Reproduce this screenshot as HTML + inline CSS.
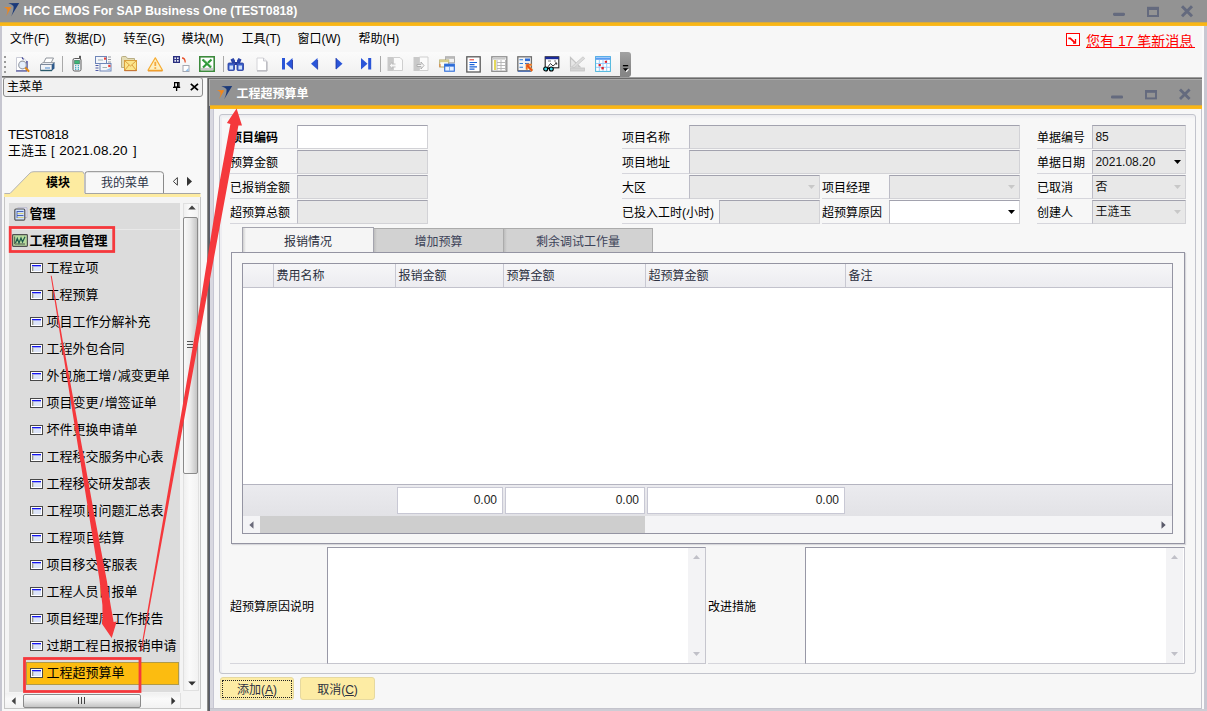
<!DOCTYPE html>
<html lang="zh-CN"><head><meta charset="utf-8"><title>HCC EMOS For SAP Business One (TEST0818)</title>
<style>
html,body{margin:0;padding:0}
body{width:1207px;height:711px;overflow:hidden;position:relative;background:#f7f7f7;font-family:"Liberation Sans","Noto Sans CJK SC",sans-serif;font-size:12px;color:#000;line-height:1}
div,span{box-sizing:border-box}
.a{position:absolute}
.t{position:absolute;white-space:nowrap;line-height:16px;height:16px}
.mi{position:absolute;white-space:nowrap;font-size:13px;line-height:18px;height:18px}
.lb{position:absolute;white-space:nowrap;line-height:16px;height:24px;border-bottom:1px solid #d6d6dc;padding-top:5px}
.in{position:absolute;height:24px;background:#e8e8e8;border:1px solid #d2d2d6;border-top-color:#a2a2ae;border-left-color:#bcbcc6;line-height:22px;padding-left:2.4px;white-space:nowrap;color:#111}
.w{background:#fff}
.ic{position:absolute;width:16px;height:16px}
svg{position:absolute;overflow:visible}
</style></head><body>

<div class="a" style="left:0;top:0;width:1207px;height:23px;background:#939393"></div>
<div class="a" style="left:0;top:22px;width:1207px;height:4px;background:linear-gradient(180deg,#b9a060 0,#f9b616 1px,#f9b616 3px,#fabd30 4px)"></div>
<div class="t" style="left:23.5px;top:3px;color:#fff;font-weight:bold;font-size:12.3px">HCC EMOS For SAP Business One (TEST0818)</div>
<svg style="left:0px;top:0px" width="20" height="18" viewBox="0 0 20 18"><path d="M8.2 3.2 L19.2 3 L11.2 16.3 Q14.3 9 13.4 6 Q12 4.2 8.2 3.2Z" fill="#1b3a7a"/><path d="M4 7 L11.3 7.2 L6.1 16.3 Q8 11.5 7.3 9.6 Q6.5 8 4 7Z" fill="#f0861a"/></svg>
<svg style="left:1113px;top:4px" width="90" height="16" viewBox="0 0 90 16"><rect x="0" y="8.7" width="12" height="3.2" rx="1.4" fill="#646a7e"/><rect x="35" y="4" width="10" height="8" fill="none" stroke="#646a7e" stroke-width="2"/><rect x="34" y="2.8" width="12" height="3.2" fill="#646a7e"/><path d="M69 2.3 L79 12.3 M79 2.3 L69 12.3" stroke="#646a7e" stroke-width="3" fill="none"/></svg>
<div class="t" style="left:10px;top:31px">文件(F)</div>
<div class="t" style="left:65px;top:31px">数据(D)</div>
<div class="t" style="left:123.5px;top:31px">转至(G)</div>
<div class="t" style="left:181.5px;top:31px">模块(M)</div>
<div class="t" style="left:241.5px;top:31px">工具(T)</div>
<div class="t" style="left:297.5px;top:31px">窗口(W)</div>
<div class="t" style="left:358.5px;top:31px">帮助(H)</div>
<div class="t" style="left:1086px;top:32.6px;font-size:14px;color:#f00">您有 17 笔新消息</div>
<div class="a" style="left:1086px;top:47px;width:109px;height:1px;background:#f00"></div>
<svg style="left:1066px;top:33px" width="14" height="13" viewBox="0 0 14 13"><rect x="0.5" y="0.5" width="13" height="12" fill="#fff" stroke="#f00" stroke-width="1"/><path d="M2.3 5.4 L4.3 5.4 L8.8 9.6" stroke="#f00" stroke-width="1.7" fill="none"/><path d="M9.5 6 V10.2 H7" stroke="#f00" stroke-width="1.3" fill="none"/></svg>
<div class="a" style="left:2px;top:52px;width:618px;height:24px;background:linear-gradient(180deg,#fbfbfb,#f0f0f0)"></div>
<div class="a" style="left:0;top:76px;width:629px;height:1px;background:#686868"></div>
<div class="a" style="left:0;top:77px;width:1202px;height:1px;background:#9e9e9e"></div>
<div class="a" style="left:4px;top:56px;width:2px;height:2px;background:#9a9a9a"></div>
<div class="a" style="left:4px;top:61px;width:2px;height:2px;background:#9a9a9a"></div>
<div class="a" style="left:4px;top:66px;width:2px;height:2px;background:#9a9a9a"></div>
<div class="a" style="left:4px;top:71px;width:2px;height:2px;background:#9a9a9a"></div>
<div class="a" style="left:62px;top:56px;width:1px;height:16px;background:#a9a9a9"></div>
<div class="a" style="left:223px;top:56px;width:1px;height:16px;background:#a9a9a9"></div>
<div class="a" style="left:380px;top:56px;width:1px;height:16px;background:#a9a9a9"></div>
<svg style="left:14px;top:56px" width="16" height="16" viewBox="0 0 16 16"><path d="M2.5 1.5 H9 L12.5 5 V14.5 H2.5Z" fill="#fff" stroke="#c9cbd6" stroke-width="1"/><path d="M2 15 H13 M13 5 V15" stroke="#2a2f8a" stroke-width="1.2" fill="none"/><circle cx="8.5" cy="9" r="3.8" fill="#e6f0fc" stroke="#9a9fa8" stroke-width="1.2"/><path d="M11.8 12.2 L14.5 15" stroke="#e08a1c" stroke-width="2.2" stroke-linecap="round"/><path d="M8 1.5 L9.5 3.5" stroke="#2a2f8a" stroke-width="1.2"/></svg>
<svg style="left:39px;top:56px" width="17" height="16" viewBox="0 0 17 16"><path d="M4.5 7 L7 2 H14.5 L12 7Z" fill="#fff" stroke="#8f949c" stroke-width="1"/><path d="M1.5 8.5 L4 6.5 H15.5 L13 8.5Z" fill="#e9ecf2" stroke="#8f949c" stroke-width="0.8"/><path d="M1.5 8.5 H13 V14.5 H1.5Z" fill="#f1f3f7" stroke="#7d8a9c" stroke-width="1"/><path d="M13 8.5 L15.5 6.5 V12.5 L13 14.5Z" fill="#2e5a8c"/><path d="M1.5 14.5 H13" stroke="#2a5a6a" stroke-width="1.4"/><path d="M6 12 H11" stroke="#7aa6d8" stroke-width="1.4"/></svg>
<svg style="left:72px;top:55px" width="10" height="17" viewBox="0 0 10 17"><rect x="7.2" y="0.8" width="1.6" height="4" fill="#333"/><rect x="1" y="3.5" width="8" height="12.5" rx="1.6" fill="#f2f3f5" stroke="#5a5a5a" stroke-width="1"/><rect x="2.7" y="5.5" width="4.6" height="3.4" fill="#3cb878" stroke="#2a6a4a" stroke-width="0.6"/><path d="M3 10.6 H4.3 M5.7 10.6 H7 M3 12.6 H4.3 M5.7 12.6 H7 M3 14.4 H4.3 M5.7 14.4 H7" stroke="#4ab0c8" stroke-width="1.1"/></svg>
<svg style="left:94px;top:55px" width="18" height="17" viewBox="0 0 18 17"><rect x="1.5" y="1.5" width="11" height="7" fill="#f4f6fb" stroke="#6f86b8" stroke-width="1"/><rect x="10" y="2.5" width="2.2" height="2.2" fill="#e8433a"/><path d="M4 5 H9" stroke="#9aa" stroke-width="0.9"/><path d="M14 2 H17 M14 4.5 H17 M14 7 H17" stroke="#8a8f98" stroke-width="0.9"/><rect x="6" y="8.5" width="11" height="7.5" fill="#f4f6fb" stroke="#6f86b8" stroke-width="1"/><rect x="14.2" y="9.8" width="2.3" height="2.3" fill="#e8433a"/><path d="M8.5 12.5 H13" stroke="#9aa" stroke-width="0.9"/><path d="M12 15 H16.5 V13Z" fill="#8fc0ee"/><path d="M1.5 10.5 H4.5 M1.5 13 H4.5 M1.5 15.5 H4.5" stroke="#3a4aa0" stroke-width="0.9"/></svg>
<svg style="left:120px;top:55px" width="18" height="17" viewBox="0 0 18 17"><path d="M1.5 2.5 Q1.5 1.5 2.5 1.5 H6 L7.5 3.5 H14.5 V12.5 H1.5Z" fill="#e4dcb4" stroke="#b9ae84" stroke-width="1"/><rect x="4.5" y="5.5" width="12" height="10" fill="#fbe58a" stroke="#d9a13c" stroke-width="1"/><path d="M4.5 5.5 L10.5 11 L16.5 5.5 M4.5 15.5 L9 10 M16.5 15.5 L12 10" fill="none" stroke="#d9963a" stroke-width="0.9"/><path d="M4.5 15.7 H16.5" stroke="#c06a3a" stroke-width="0.9"/></svg>
<svg style="left:146px;top:56px" width="18" height="16" viewBox="0 0 18 16"><path d="M9.3 1.8 L16.5 14.3 H2 Z" fill="#fdf0c4" stroke="#f6ac32" stroke-width="1.25" stroke-linejoin="round"/><path d="M2 15 H16.5" stroke="#e8922a" stroke-width="1"/><path d="M9.3 5.8 V10" stroke="#f4a840" stroke-width="1.8"/><rect x="8.4" y="11.2" width="1.8" height="1.7" fill="#f4a840"/></svg>
<svg style="left:172px;top:55px" width="18" height="17" viewBox="0 0 18 17"><rect x="1" y="1" width="7" height="7" fill="#2a2f80"/><rect x="2.4" y="2.4" width="1.7" height="1.7" fill="#e8eaf6"/><rect x="5" y="2.4" width="1.7" height="1.7" fill="#e8eaf6"/><rect x="2.4" y="5" width="1.7" height="1.7" fill="#e8eaf6"/><rect x="5" y="5" width="1.7" height="1.7" fill="#e8eaf6"/><path d="M10 3 Q13.2 3 13.2 7.5" fill="none" stroke="#e8502a" stroke-width="1.3"/><rect x="11" y="10.5" width="6" height="6" fill="#fff" stroke="#a4a8b2" stroke-width="1"/><path d="M13.5 16 H16.5 V13Z" fill="#8fc0ee"/></svg>
<svg style="left:199px;top:56px" width="16" height="16" viewBox="0 0 16 16"><rect x="0.8" y="0.8" width="14.4" height="14.4" fill="#fff" stroke="#3d8a3d" stroke-width="1.6"/><rect x="2" y="11.8" width="12" height="2.4" fill="#c8c8c8"/><path d="M3.5 3.5 L12 11.5 M12.5 3.5 L4 11.5" stroke="#2f9a3a" stroke-width="2.2"/><path d="M5 3.5 L13 10.5" stroke="#8fd08f" stroke-width="0.8"/></svg>
<svg style="left:227px;top:57px" width="18" height="15" viewBox="0 0 18 15"><path d="M3.5 2.5 L6.5 1 L8 3.5 V6 H5 Z M10 3.5 L11.5 1 L14.5 2.5 L13 6 H10Z" fill="#2a44a8"/><rect x="1" y="6" width="6.5" height="7.5" rx="1" fill="#3a5fc8" stroke="#24389a" stroke-width="0.8"/><rect x="10" y="6" width="6.5" height="7.5" rx="1" fill="#3a5fc8" stroke="#24389a" stroke-width="0.8"/><rect x="2.5" y="8.5" width="3.5" height="4" fill="#cfe0fa"/><rect x="11.5" y="8.5" width="3.5" height="4" fill="#cfe0fa"/><rect x="7.5" y="5" width="2.5" height="3" fill="#24389a"/></svg>
<svg style="left:256px;top:57px" width="12" height="15" viewBox="0 0 12 15"><path d="M1 1 H7.5 L10.5 4 V13.5 H1Z" fill="#fff" stroke="#d4d4d8" stroke-width="1"/><path d="M1 14 H11 M11 4.5 V14" stroke="#a9a9b0" stroke-width="1" fill="none"/><path d="M7.5 1 V4 H10.5" fill="#ececf0" stroke="#c0c0c6" stroke-width="0.8"/></svg>
<svg style="left:282px;top:58px" width="12" height="12" viewBox="0 0 12 12"><rect x="0" y="0" width="3" height="11.5" fill="#2a55d8"/><path d="M10.5 0 V11.5 L4 5.75Z" fill="#2a55d8"/><path d="M10.5 2 V11.5" stroke="#1a2f9a" stroke-width="0.8"/></svg>
<svg style="left:310px;top:58px" width="9" height="12" viewBox="0 0 9 12"><path d="M7.5 0 V11.5 L1 5.75Z" fill="#2a55d8"/><path d="M7.6 2 V11.5" stroke="#1a2f9a" stroke-width="0.8"/></svg>
<svg style="left:335px;top:58px" width="9" height="12" viewBox="0 0 9 12"><path d="M1 0 V11.5 L7.5 5.75Z" fill="#2a55d8"/><path d="M1 0 V11" stroke="#1a2f9a" stroke-width="0.8"/></svg>
<svg style="left:360px;top:58px" width="12" height="12" viewBox="0 0 12 12"><path d="M1 0 V11.5 L7.5 5.75Z" fill="#2a55d8"/><rect x="8.2" y="0" width="3" height="11.5" fill="#2a55d8"/></svg>
<svg style="left:387px;top:56px" width="17" height="16" viewBox="0 0 17 16"><rect x="0.5" y="1" width="7" height="14" fill="#c9c9c9"/><path d="M6.5 1.5 H13 L15.5 4 V14.5 H6.5Z" fill="#fbfbfb" stroke="#cfcfcf" stroke-width="1"/><path d="M8.5 8 H5 V6 L2.5 9.5 L5 13 V11 H8.5" fill="#f5f5f5" stroke="#bdbdbd" stroke-width="0.9"/></svg>
<svg style="left:413px;top:56px" width="17" height="16" viewBox="0 0 17 16"><rect x="0.5" y="1" width="7" height="14" fill="#c9c9c9"/><path d="M6.5 1 H15 V14.5 H6.5Z" fill="#fbfbfb" stroke="#cfcfcf" stroke-width="1"/><path d="M4 8.5 H8 V6 L11 9.5 L8 13 V10.5 H4Z" fill="#f5f5f5" stroke="#a9a9a9" stroke-width="0.9"/></svg>
<svg style="left:439px;top:56px" width="16" height="16" viewBox="0 0 16 16"><rect x="6.5" y="0.8" width="9" height="6" fill="#f2f2f2" stroke="#a8a8a8" stroke-width="1"/><rect x="6.5" y="0.8" width="9" height="2" fill="#b9b9b9"/><rect x="0.7" y="4" width="9" height="7" fill="#fdfdf6" stroke="#b2a86a" stroke-width="1"/><rect x="0.7" y="4" width="9" height="2.2" fill="#d8cf8c"/><path d="M1 8 V11" stroke="#e8702a" stroke-width="0.9"/><rect x="5.7" y="8.2" width="9.6" height="7" fill="#e6f0ff" stroke="#2a6ad8" stroke-width="1.1"/><rect x="5.7" y="8.2" width="9.6" height="2.4" fill="#2a6ad8"/><path d="M10.5 10.6 V15" stroke="#7aa8e8" stroke-width="0.9"/></svg>
<svg style="left:465.5px;top:55.5px" width="15" height="17" viewBox="0 0 15 17"><rect x="0.8" y="0.8" width="13.4" height="15.2" fill="#fff" stroke="#5a5a5a" stroke-width="1.3"/><path d="M3.5 3.8 H8" stroke="#e0403a" stroke-width="1.1"/><path d="M3.5 6.5 H11 M3.5 8.7 H8.5 M3.5 10.9 H11 M3.5 13.1 H8.5" stroke="#1a62d8" stroke-width="1.2"/></svg>
<svg style="left:490.5px;top:55.5px" width="17" height="17" viewBox="0 0 17 17"><rect x="0.8" y="0.8" width="15" height="14.5" fill="#fff" stroke="#8c8c8c" stroke-width="1.3"/><rect x="2" y="2" width="12.6" height="1.6" fill="#c9c9c9"/><rect x="3" y="4" width="2" height="10" fill="#e4d85a"/><path d="M6 6.5 H14.5 M6 9.5 H14.5 M6 12.5 H14.5 M6 4 V14.5 M10 4 V14.5 M14.5 4 V14.5" stroke="#b2b2b2" stroke-width="0.9" fill="none"/></svg>
<svg style="left:517px;top:56px" width="16" height="16" viewBox="0 0 16 16"><rect x="0.8" y="0.8" width="13.6" height="14" fill="#f4f4f6" stroke="#6c6c6c" stroke-width="1.3"/><rect x="8" y="2.5" width="5" height="2.6" fill="#2a6ad8"/><path d="M2.5 3.8 H6 M2.5 7.5 H6 M2.5 11.2 H6" stroke="#2a7ad8" stroke-width="1.1"/><path d="M8 7.5 H12" stroke="#2a6ad8" stroke-width="1.1"/><path d="M1 15.2 H14" stroke="#2a5ab8" stroke-width="1"/><path d="M9 8 H14.5 V9.5 H12 L16 14 L14.5 15.5 L10.5 11.5 V13.5 H9Z" fill="#e8501a" stroke="#f09a3a" stroke-width="0.7"/></svg>
<svg style="left:543px;top:56px" width="17" height="16" viewBox="0 0 17 16"><rect x="2.2" y="0.8" width="13.6" height="11" fill="#fff" stroke="#222" stroke-width="1.1"/><rect x="2.2" y="0.8" width="13.6" height="2.4" fill="#1a2a9a"/><path d="M5 5 H8 M11 5 H13" stroke="#555" stroke-width="0.8"/><path d="M4 12 L7.5 7.5 L10 10 L13.5 7 M12 7 H13.7 V8.7" fill="none" stroke="#222" stroke-width="0.9"/><circle cx="2.7" cy="13" r="2" fill="#3ad8e8" stroke="#000" stroke-width="1.1"/><circle cx="8.3" cy="13" r="2" fill="#3ad8e8" stroke="#000" stroke-width="1.1"/><path d="M4.7 12.5 H6.3" stroke="#000" stroke-width="1"/></svg>
<svg style="left:569px;top:56px" width="17" height="16" viewBox="0 0 17 16"><path d="M1.5 1.5 V11 H11Z" fill="#e6e6e6" stroke="#c4c4c4" stroke-width="1.2"/><path d="M3 10.5 L14 0.8 L15.8 2.5 L5 12Z" fill="#dcdcdc" stroke="#c8c8c8" stroke-width="0.8"/><rect x="1.5" y="12" width="14" height="3" fill="#d4d4d4" stroke="#c4c4c4" stroke-width="0.8"/></svg>
<svg style="left:595px;top:56px" width="16" height="16" viewBox="0 0 16 16"><rect x="0.6" y="0.6" width="14.8" height="14.8" fill="#fff" stroke="#48b4dc" stroke-width="1"/><rect x="0.6" y="0.6" width="14.8" height="3.2" fill="#5a9cf2"/><rect x="1" y="1" width="14" height="0.9" fill="#a8d0fa"/><path d="M4.3 3.8 V15 M8 3.8 V15 M11.7 3.8 V15 M1 7.5 H15 M1 11.3 H15" stroke="#9accfa" stroke-width="1"/><rect x="9.8" y="4.8" width="2.2" height="2" fill="#e0202a"/><rect x="3.6" y="8" width="2.2" height="2.2" fill="#e0202a"/><rect x="6.4" y="11" width="2.4" height="2.4" fill="#e0202a"/></svg>
<div class="a" style="left:620px;top:52px;width:11px;height:24.5px;background:linear-gradient(180deg,#a2a2a2,#8a8a8a 60%,#858585);border-radius:0 3px 3px 0"></div>
<svg style="left:622px;top:64px" width="8" height="9" viewBox="0 0 8 9"><path d="M1.9 5.2 L7.2 5.2 L4.55 8.2Z" fill="#fff"/><rect x="0.9" y="1" width="5.3" height="1.3" fill="#000"/><path d="M0.9 4.2 L6.2 4.2 L3.55 7.2Z" fill="#000"/></svg>
<div class="a" style="left:207px;top:77px;width:995px;height:634px;background:#939393"></div>
<div class="a" style="left:207px;top:77px;width:995px;height:1px;background:#9e9e9e"></div>
<div class="a" style="left:207px;top:78px;width:995px;height:1px;background:#6a6a6a"></div>
<div class="a" style="left:1202px;top:26px;width:5px;height:685px;background:#fbfbfb"></div>
<div class="a" style="left:1204px;top:26px;width:3px;height:685px;background:#c8c8d2"></div>
<div class="a" style="left:0;top:79px;width:207px;height:632px;background:#f8f8f8"></div>
<div class="a" style="left:0;top:26px;width:1.5px;height:685px;background:#c6c6d0"></div>
<div class="a" style="left:3px;top:77px;width:200px;height:20px;border:1px solid #8c8c8c;border-radius:3px;background:#f1f1f1"></div>
<div class="t" style="left:7px;top:79px;font-size:12px">主菜单</div>
<svg style="left:172px;top:82px" width="10" height="11" viewBox="0 0 10 11"><path d="M2.6 0.6 H7 V5 H2.6Z M5.6 0.6 V5" fill="none" stroke="#000" stroke-width="1.2"/><path d="M1 5.4 H8.2 M4.6 5.4 V9" stroke="#000" stroke-width="1.3"/></svg>
<svg style="left:189.5px;top:83px" width="9" height="8" viewBox="0 0 9 8"><path d="M0.8 0.8 L8 7.2 M8 0.8 L0.8 7.2" stroke="#000" stroke-width="1.7"/></svg>
<div class="t" style="left:8px;top:127px;font-size:13.5px;letter-spacing:-0.55px">TEST0818</div>
<div class="t" style="left:8px;top:143px;font-size:13px">王涟玉<span class="a" style="left:43px;top:0">[</span><span class="a" style="left:51.2px;top:0;font-size:13.5px;letter-spacing:0.08px">2021.08.20</span><span class="a" style="left:125px;top:0">]</span></div>
<svg style="left:0;top:168px" width="205" height="32" viewBox="0 0 205 32"><path d="M85 25.5 V6 Q85 3.7 87.5 3.7 H160.5 Q163.5 3.7 163.5 6.5 V25.5" fill="#f8f8f8" stroke="#8a8a8a" stroke-width="1"/><path d="M4 25.5 H10 L30 5 Q31.5 3.7 34 3.7 H82 Q84 3.7 84 6 V25.7 H200.5 V29.2 H4Z" fill="#fdeba0"/><path d="M4.5 25.5 H10 L30 5 Q31.5 3.7 34 3.7 H82 Q84 3.7 84 6" fill="none" stroke="#b4b4b4" stroke-width="1"/><path d="M85 25.5 H200.5" fill="none" stroke="#a4a4a4" stroke-width="1"/><path d="M173.3 13.4 L177.4 9.6 V17.2Z" fill="#f8f8f8" stroke="#444" stroke-width="1"/><path d="M192 13.4 L187 8.8 V18Z" fill="#333"/></svg>
<div class="t" style="left:46px;top:175px;font-size:12px;font-weight:bold">模块</div>
<div class="t" style="left:101px;top:175px;font-size:12px;color:#2c3448">我的菜单</div>
<div class="a" style="left:4px;top:197px;width:197px;height:512px;background:#f4f4f4;border:1px solid #c6c6c6;border-top:none"></div>
<div class="a" style="left:9px;top:203px;width:171px;height:489px;background:#dcdcdc"></div>
<div class="a" style="left:9px;top:229px;width:171px;height:1px;background:#e9e9e9"></div>
<div class="a" style="left:26px;top:662px;width:153px;height:23px;background:#fcbc10;border:1px solid #b09a48"></div>
<div class="mi" style="left:29.4px;top:205px;font-weight:bold">管理</div>
<div class="mi" style="left:29.4px;top:232px;font-weight:bold">工程项目管理</div>
<div class="mi" style="left:46.4px;top:259px">工程立项</div>
<svg style="left:30px;top:263px" width="13" height="10" viewBox="0 0 13 10"><rect x="0.5" y="0.5" width="12" height="9" fill="#fff" stroke="#484848"/><rect x="2" y="2" width="9" height="6" fill="#dce4f8"/><rect x="2" y="2" width="9" height="1.3" fill="#1414f0"/><rect x="2" y="3.3" width="1.3" height="4.7" fill="#9a9a8a"/></svg>
<div class="mi" style="left:46.4px;top:286px">工程预算</div>
<svg style="left:30px;top:290px" width="13" height="10" viewBox="0 0 13 10"><rect x="0.5" y="0.5" width="12" height="9" fill="#fff" stroke="#484848"/><rect x="2" y="2" width="9" height="6" fill="#dce4f8"/><rect x="2" y="2" width="9" height="1.3" fill="#1414f0"/><rect x="2" y="3.3" width="1.3" height="4.7" fill="#9a9a8a"/></svg>
<div class="mi" style="left:46.4px;top:313px">项目工作分解补充</div>
<svg style="left:30px;top:317px" width="13" height="10" viewBox="0 0 13 10"><rect x="0.5" y="0.5" width="12" height="9" fill="#fff" stroke="#484848"/><rect x="2" y="2" width="9" height="6" fill="#dce4f8"/><rect x="2" y="2" width="9" height="1.3" fill="#1414f0"/><rect x="2" y="3.3" width="1.3" height="4.7" fill="#9a9a8a"/></svg>
<div class="mi" style="left:46.4px;top:340px">工程外包合同</div>
<svg style="left:30px;top:344px" width="13" height="10" viewBox="0 0 13 10"><rect x="0.5" y="0.5" width="12" height="9" fill="#fff" stroke="#484848"/><rect x="2" y="2" width="9" height="6" fill="#dce4f8"/><rect x="2" y="2" width="9" height="1.3" fill="#1414f0"/><rect x="2" y="3.3" width="1.3" height="4.7" fill="#9a9a8a"/></svg>
<div class="mi" style="left:46.4px;top:367px">外包施工增<span style="padding:0 1.4px">/</span>减变更单</div>
<svg style="left:30px;top:371px" width="13" height="10" viewBox="0 0 13 10"><rect x="0.5" y="0.5" width="12" height="9" fill="#fff" stroke="#484848"/><rect x="2" y="2" width="9" height="6" fill="#dce4f8"/><rect x="2" y="2" width="9" height="1.3" fill="#1414f0"/><rect x="2" y="3.3" width="1.3" height="4.7" fill="#9a9a8a"/></svg>
<div class="mi" style="left:46.4px;top:394px">项目变更<span style="padding:0 1.4px">/</span>增签证单</div>
<svg style="left:30px;top:398px" width="13" height="10" viewBox="0 0 13 10"><rect x="0.5" y="0.5" width="12" height="9" fill="#fff" stroke="#484848"/><rect x="2" y="2" width="9" height="6" fill="#dce4f8"/><rect x="2" y="2" width="9" height="1.3" fill="#1414f0"/><rect x="2" y="3.3" width="1.3" height="4.7" fill="#9a9a8a"/></svg>
<div class="mi" style="left:46.4px;top:421px">坏件更换申请单</div>
<svg style="left:30px;top:425px" width="13" height="10" viewBox="0 0 13 10"><rect x="0.5" y="0.5" width="12" height="9" fill="#fff" stroke="#484848"/><rect x="2" y="2" width="9" height="6" fill="#dce4f8"/><rect x="2" y="2" width="9" height="1.3" fill="#1414f0"/><rect x="2" y="3.3" width="1.3" height="4.7" fill="#9a9a8a"/></svg>
<div class="mi" style="left:46.4px;top:448px">工程移交服务中心表</div>
<svg style="left:30px;top:452px" width="13" height="10" viewBox="0 0 13 10"><rect x="0.5" y="0.5" width="12" height="9" fill="#fff" stroke="#484848"/><rect x="2" y="2" width="9" height="6" fill="#dce4f8"/><rect x="2" y="2" width="9" height="1.3" fill="#1414f0"/><rect x="2" y="3.3" width="1.3" height="4.7" fill="#9a9a8a"/></svg>
<div class="mi" style="left:46.4px;top:475px">工程移交研发部表</div>
<svg style="left:30px;top:479px" width="13" height="10" viewBox="0 0 13 10"><rect x="0.5" y="0.5" width="12" height="9" fill="#fff" stroke="#484848"/><rect x="2" y="2" width="9" height="6" fill="#dce4f8"/><rect x="2" y="2" width="9" height="1.3" fill="#1414f0"/><rect x="2" y="3.3" width="1.3" height="4.7" fill="#9a9a8a"/></svg>
<div class="mi" style="left:46.4px;top:502px">工程项目问题汇总表</div>
<svg style="left:30px;top:506px" width="13" height="10" viewBox="0 0 13 10"><rect x="0.5" y="0.5" width="12" height="9" fill="#fff" stroke="#484848"/><rect x="2" y="2" width="9" height="6" fill="#dce4f8"/><rect x="2" y="2" width="9" height="1.3" fill="#1414f0"/><rect x="2" y="3.3" width="1.3" height="4.7" fill="#9a9a8a"/></svg>
<div class="mi" style="left:46.4px;top:529px">工程项目结算</div>
<svg style="left:30px;top:533px" width="13" height="10" viewBox="0 0 13 10"><rect x="0.5" y="0.5" width="12" height="9" fill="#fff" stroke="#484848"/><rect x="2" y="2" width="9" height="6" fill="#dce4f8"/><rect x="2" y="2" width="9" height="1.3" fill="#1414f0"/><rect x="2" y="3.3" width="1.3" height="4.7" fill="#9a9a8a"/></svg>
<div class="mi" style="left:46.4px;top:556px">项目移交客服表</div>
<svg style="left:30px;top:560px" width="13" height="10" viewBox="0 0 13 10"><rect x="0.5" y="0.5" width="12" height="9" fill="#fff" stroke="#484848"/><rect x="2" y="2" width="9" height="6" fill="#dce4f8"/><rect x="2" y="2" width="9" height="1.3" fill="#1414f0"/><rect x="2" y="3.3" width="1.3" height="4.7" fill="#9a9a8a"/></svg>
<div class="mi" style="left:46.4px;top:583px">工程人员日报单</div>
<svg style="left:30px;top:587px" width="13" height="10" viewBox="0 0 13 10"><rect x="0.5" y="0.5" width="12" height="9" fill="#fff" stroke="#484848"/><rect x="2" y="2" width="9" height="6" fill="#dce4f8"/><rect x="2" y="2" width="9" height="1.3" fill="#1414f0"/><rect x="2" y="3.3" width="1.3" height="4.7" fill="#9a9a8a"/></svg>
<div class="mi" style="left:46.4px;top:610px">项目经理周工作报告</div>
<svg style="left:30px;top:614px" width="13" height="10" viewBox="0 0 13 10"><rect x="0.5" y="0.5" width="12" height="9" fill="#fff" stroke="#484848"/><rect x="2" y="2" width="9" height="6" fill="#dce4f8"/><rect x="2" y="2" width="9" height="1.3" fill="#1414f0"/><rect x="2" y="3.3" width="1.3" height="4.7" fill="#9a9a8a"/></svg>
<div class="mi" style="left:46.4px;top:637px">过期工程日报报销申请</div>
<svg style="left:30px;top:641px" width="13" height="10" viewBox="0 0 13 10"><rect x="0.5" y="0.5" width="12" height="9" fill="#fff" stroke="#484848"/><rect x="2" y="2" width="9" height="6" fill="#dce4f8"/><rect x="2" y="2" width="9" height="1.3" fill="#1414f0"/><rect x="2" y="3.3" width="1.3" height="4.7" fill="#9a9a8a"/></svg>
<div class="mi" style="left:46.4px;top:664px">工程超预算单</div>
<svg style="left:30px;top:668px" width="13" height="10" viewBox="0 0 13 10"><rect x="0.5" y="0.5" width="12" height="9" fill="#fff" stroke="#484848"/><rect x="2" y="2" width="9" height="6" fill="#dce4f8"/><rect x="2" y="2" width="9" height="1.3" fill="#1414f0"/><rect x="2" y="3.3" width="1.3" height="4.7" fill="#9a9a8a"/></svg>
<svg style="left:14px;top:207px" width="14" height="14" viewBox="0 0 14 14"><path d="M3.5 0.7 H13 V10.5 H11" fill="#e4e4f6" stroke="#b8b8cc" stroke-width="0.9"/><rect x="0.8" y="2" width="10" height="11.2" rx="1.2" fill="#cfe0fa" stroke="#555" stroke-width="1.2"/><path d="M3 4.5H9.5M3 8.5H9.5" stroke="#3a55b0" stroke-width="0.9"/><path d="M3 6.5H9.5M3 10.5H9.5" stroke="#d8cf70" stroke-width="0.9"/><path d="M3 4 V11" stroke="#3a55b0" stroke-width="0.8"/></svg>
<svg style="left:12px;top:233.5px" width="16" height="13" viewBox="0 0 16 13"><rect x="0.6" y="0.6" width="14.8" height="11.8" rx="0.8" fill="#b8dca0" stroke="#505050" stroke-width="1.2"/><path d="M2.7 2.5 V10 H13" fill="none" stroke="#444" stroke-width="0.9"/><path d="M3.5 9 L5.3 4.5 L7 9 L9 4 L10.5 8 L13 2.8" fill="none" stroke="#1c5a4a" stroke-width="1.2"/></svg>
<div class="a" style="left:183px;top:203px;width:16px;height:488px;background:linear-gradient(90deg,#f0f0f0,#fafafa 40%,#f2f2f2);border:1px solid #e0e0e0"></div>
<div class="a" style="left:183px;top:217px;width:15px;height:257px;border:1px solid #8a8a8a;border-radius:2px;background:linear-gradient(90deg,#fafafa,#ececec 45%,#c4c4c4)"></div>
<svg style="left:187.5px;top:205px" width="8" height="5" viewBox="0 0 8 5"><path d="M0.2 4.6 L4 0.6 L7.8 4.6Z" fill="#444"/></svg>
<svg style="left:187.5px;top:680.5px" width="8" height="5" viewBox="0 0 8 5"><path d="M0.2 0.4 L4 4.4 L7.8 0.4Z" fill="#333"/></svg>
<div class="a" style="left:187px;top:341px;width:6px;height:1px;background:#555"></div><div class="a" style="left:187px;top:344px;width:6px;height:1px;background:#555"></div><div class="a" style="left:187px;top:347px;width:6px;height:1px;background:#555"></div>
<div class="a" style="left:5px;top:693px;width:176px;height:15px;background:linear-gradient(180deg,#f0f0f0,#fafafa 40%,#f2f2f2);border-right:1px solid #e0e0e0"></div>
<div class="a" style="left:23px;top:694px;width:118px;height:14px;border:1px solid #8a8a8a;border-radius:2px;background:linear-gradient(180deg,#fafafa,#ececec 45%,#c4c4c4)"></div>
<svg style="left:10.5px;top:696.5px" width="5" height="8" viewBox="0 0 5 8"><path d="M4.6 0.2 L0.6 4 L4.6 7.8Z" fill="#444"/></svg>
<svg style="left:171px;top:696.5px" width="5" height="8" viewBox="0 0 5 8"><path d="M0.4 0.2 L4.4 4 L0.4 7.8Z" fill="#333"/></svg>
<div class="a" style="left:78px;top:697px;width:1px;height:7px;background:#444"></div><div class="a" style="left:81px;top:697px;width:1px;height:7px;background:#444"></div><div class="a" style="left:84px;top:697px;width:1px;height:7px;background:#444"></div>
<div class="a" style="left:207px;top:78px;width:1px;height:633px;background:#8c8c8c"></div>
<div class="a" style="left:208px;top:78px;width:1px;height:633px;background:#606060"></div>
<div class="a" style="left:209px;top:79px;width:1px;height:632px;background:#5a5e6e"></div>
<div class="a" style="left:209px;top:79px;width:1px;height:27px;background:#b0b0b0"></div>
<div class="a" style="left:210px;top:79px;width:992px;height:630px;background:#f7f7f7"></div>
<div class="a" style="left:210px;top:109px;width:3px;height:600px;background:#d8d8e0"></div>
<div class="a" style="left:213px;top:109px;width:1px;height:600px;background:#c6c6d2"></div>
<div class="a" style="left:1201px;top:109px;width:1px;height:600px;background:#c4c4cc"></div>
<div class="a" style="left:210px;top:708px;width:992px;height:1px;background:#c4c4cc"></div>
<div class="a" style="left:210px;top:709px;width:997px;height:2px;background:#cdcdd5"></div>
<div class="a" style="left:210px;top:79px;width:992px;height:27px;background:#939393;border-top:1px solid #aaa"></div>
<div class="a" style="left:210px;top:105px;width:992px;height:4px;background:linear-gradient(180deg,#b9a060 0,#f9b616 1px,#f9b616 3px,#fabd30 4px)"></div>
<svg style="left:213.3px;top:82.8px" width="20" height="18" viewBox="0 0 20 18"><path d="M8.2 3.2 L19.2 3 L11.2 16.3 Q14.3 9 13.4 6 Q12 4.2 8.2 3.2Z" fill="#1b3a7a"/><path d="M4 7 L11.3 7.2 L6.1 16.3 Q8 11.5 7.3 9.6 Q6.5 8 4 7Z" fill="#f0861a"/></svg>
<div class="t" style="left:236.5px;top:86px;color:#fff;font-weight:bold;font-size:12px">工程超预算单</div>
<svg style="left:1110.5px;top:87px" width="90" height="16" viewBox="0 0 90 16"><rect x="0" y="8.6" width="12" height="2.8" rx="1.2" fill="#646a7e"/><rect x="35" y="4" width="10" height="7.4" fill="none" stroke="#646a7e" stroke-width="1.9"/><rect x="34" y="3" width="12" height="2.8" fill="#646a7e"/><path d="M69 2.5 L78.6 12 M78.6 2.5 L69 12" stroke="#646a7e" stroke-width="2.8" fill="none"/></svg>
<div class="a" style="left:219px;top:114px;width:977px;height:560px;border:1px solid #c2c4cc;border-radius:3px;background:linear-gradient(180deg,#ebebef 0,#f7f7f7 4px);box-shadow:inset 2px 0 0 #eeeef2"></div>
<div class="lb" style="left:230px;top:125px;width:67px;font-weight:bold;">项目编码</div>
<div class="in w" style="left:297px;top:125px;width:131px"></div>
<div class="lb" style="left:230px;top:150px;width:67px;">预算金额</div>
<div class="in" style="left:297px;top:150px;width:131px"></div>
<div class="lb" style="left:230px;top:175px;width:67px;">已报销金额</div>
<div class="in" style="left:297px;top:175px;width:131px"></div>
<div class="lb" style="left:230px;top:200px;width:67px;">超预算总额</div>
<div class="in" style="left:297px;top:200px;width:131px"></div>
<div class="lb" style="left:622px;top:125px;width:67px;">项目名称</div>
<div class="in" style="left:689px;top:125px;width:331px"></div>
<div class="lb" style="left:622px;top:150px;width:67px;">项目地址</div>
<div class="in" style="left:689px;top:150px;width:331px"></div>
<div class="lb" style="left:622px;top:175px;width:67px;">大区</div>
<div class="in" style="left:689px;top:175px;width:131px"><svg style="right:4px;top:9px" width="7" height="4" viewBox="0 0 7 4"><path d="M0 0 H7 L3.5 4Z" fill="#c8c8c8"/></svg></div>
<div class="lb" style="left:822px;top:175px;width:67px;">项目经理</div>
<div class="in" style="left:889px;top:175px;width:131px"><svg style="right:4px;top:9px" width="7" height="4" viewBox="0 0 7 4"><path d="M0 0 H7 L3.5 4Z" fill="#c8c8c8"/></svg></div>
<div class="lb" style="left:622px;top:200px;width:97px;">已投入工时(小时)</div>
<div class="in" style="left:719px;top:200px;width:101px"></div>
<div class="lb" style="left:822px;top:200px;width:67px;">超预算原因</div>
<div class="in w" style="left:889px;top:200px;width:131px"><svg style="right:4px;top:9px" width="7" height="4" viewBox="0 0 7 4"><path d="M0 0 H7 L3.5 4Z" fill="#000"/></svg></div>
<div class="lb" style="left:1037px;top:125px;width:55px;">单据编号</div>
<div class="in" style="left:1092px;top:125px;width:94px">85</div>
<div class="lb" style="left:1037px;top:150px;width:55px;">单据日期</div>
<div class="in" style="left:1092px;top:150px;width:94px">2021.08.20<svg style="right:4px;top:9px" width="7" height="4" viewBox="0 0 7 4"><path d="M0 0 H7 L3.5 4Z" fill="#000"/></svg></div>
<div class="lb" style="left:1037px;top:175px;width:55px;">已取消</div>
<div class="in" style="left:1092px;top:175px;width:94px">否<svg style="right:4px;top:9px" width="7" height="4" viewBox="0 0 7 4"><path d="M0 0 H7 L3.5 4Z" fill="#c8c8c8"/></svg></div>
<div class="lb" style="left:1037px;top:200px;width:55px;">创建人</div>
<div class="in" style="left:1092px;top:200px;width:94px">王涟玉<svg style="right:4px;top:9px" width="7" height="4" viewBox="0 0 7 4"><path d="M0 0 H7 L3.5 4Z" fill="#c8c8c8"/></svg></div>
<div class="a" style="left:231px;top:252px;width:954px;height:292px;border:1px solid #9494a2;background:#f7f7f7;box-shadow:1px 1px 1px #d8d8dc"></div>
<div class="a" style="left:373px;top:228px;width:131px;height:24px;background:linear-gradient(90deg,#bdbdbd 0,#d2d2d2 3px);border:1px solid #ababab;border-bottom:none"></div>
<div class="a" style="left:503px;top:228px;width:150px;height:24px;background:linear-gradient(90deg,#bdbdbd 0,#d2d2d2 3px);border:1px solid #ababab;border-bottom:none"></div>
<div class="a" style="left:242px;top:227px;width:132px;height:25px;background:linear-gradient(90deg,#d0d0d0 0,#f5f5f5 3px);border:1px solid #a4a4ae;border-bottom:none"></div>
<div class="t" style="left:242px;top:234px;width:132px;text-align:center;color:#2c3040">报销情况</div>
<div class="t" style="left:373px;top:234px;width:131px;text-align:center;color:#3c4258">增加预算</div>
<div class="t" style="left:503px;top:234px;width:150px;text-align:center;color:#3c4258">剩余调试工作量</div>
<div class="a" style="left:242px;top:263px;width:931px;height:271px;border:1px solid #9494a2;background:#fff"></div>
<div class="a" style="left:243px;top:264px;width:929px;height:24px;background:linear-gradient(180deg,#f6f6f8,#ececf0);border-bottom:1px solid #c2c2cc"></div>
<div class="a" style="left:273px;top:264px;width:1px;height:23px;background:#c8c8d2"></div>
<div class="t" style="left:276.5px;top:268px;color:#2c3040">费用名称</div>
<div class="a" style="left:395px;top:264px;width:1px;height:23px;background:#c8c8d2"></div>
<div class="t" style="left:398.5px;top:268px;color:#2c3040">报销金额</div>
<div class="a" style="left:503px;top:264px;width:1px;height:23px;background:#c8c8d2"></div>
<div class="t" style="left:506.5px;top:268px;color:#2c3040">预算金额</div>
<div class="a" style="left:645px;top:264px;width:1px;height:23px;background:#c8c8d2"></div>
<div class="t" style="left:648.5px;top:268px;color:#2c3040">超预算金额</div>
<div class="a" style="left:845px;top:264px;width:1px;height:23px;background:#c8c8d2"></div>
<div class="t" style="left:848.5px;top:268px;color:#2c3040">备注</div>
<div class="a" style="left:243px;top:484px;width:929px;height:32px;background:linear-gradient(180deg,#ebebef,#e2e2e6);border-top:1px solid #b4b4c0"></div>
<div class="a" style="left:397px;top:487px;width:106px;height:27px;background:#fff;border:1px solid #c8c8d4;text-align:right;padding-right:5px;line-height:25px;color:#222">0.00</div>
<div class="a" style="left:505px;top:487px;width:140px;height:27px;background:#fff;border:1px solid #c8c8d4;text-align:right;padding-right:5px;line-height:25px;color:#222">0.00</div>
<div class="a" style="left:647px;top:487px;width:198px;height:27px;background:#fff;border:1px solid #c8c8d4;text-align:right;padding-right:5px;line-height:25px;color:#222">0.00</div>
<div class="a" style="left:243px;top:516px;width:929px;height:17px;background:#f4f4f6"></div>
<div class="a" style="left:260px;top:516px;width:385px;height:17px;background:#cecece"></div>
<svg style="left:249px;top:521px" width="5" height="8" viewBox="0 0 5 8"><path d="M4.5 0.3 L0.3 4 L4.5 7.7Z" fill="#6a6a7a"/></svg>
<svg style="left:1161px;top:521px" width="5" height="8" viewBox="0 0 5 8"><path d="M0.5 0.3 L4.7 4 L0.5 7.7Z" fill="#5a5a6a"/></svg>
<div class="a" style="left:327px;top:547px;width:379px;height:117px;background:#fff;border:1px solid #c6c6ce;border-top-color:#9898a6;border-left-color:#9898a6"></div>
<div class="a" style="left:688px;top:548px;width:17px;height:115px;background:#f3f3f5"></div>
<svg style="left:693px;top:555px" width="7" height="4" viewBox="0 0 7 4"><path d="M0 4 H7 L3.5 0Z" fill="#c0c0c8"/></svg>
<svg style="left:693px;top:652px" width="7" height="4" viewBox="0 0 7 4"><path d="M0 0 H7 L3.5 4Z" fill="#c0c0c8"/></svg>
<div class="a" style="left:805px;top:547px;width:380px;height:117px;background:#fff;border:1px solid #c6c6ce;border-top-color:#9898a6;border-left-color:#9898a6"></div>
<div class="a" style="left:1166px;top:548px;width:17px;height:115px;background:#f3f3f5"></div>
<svg style="left:1171px;top:555px" width="7" height="4" viewBox="0 0 7 4"><path d="M0 4 H7 L3.5 0Z" fill="#c0c0c8"/></svg>
<svg style="left:1171px;top:652px" width="7" height="4" viewBox="0 0 7 4"><path d="M0 0 H7 L3.5 4Z" fill="#c0c0c8"/></svg>
<div class="a" style="left:230px;top:547px;width:97px;height:117px;border-bottom:1px solid #d6d6dc"></div>
<div class="a" style="left:708px;top:547px;width:97px;height:117px;border-bottom:1px solid #d6d6dc"></div>
<div class="t" style="left:230px;top:598.5px">超预算原因说明</div>
<div class="t" style="left:708px;top:598.5px">改进措施</div>
<div class="a" style="left:220px;top:677px;width:74px;height:23px;background:#fdeca4;border:1px solid #e6d9a0;border-radius:3px"></div>
<div class="a" style="left:222px;top:680px;width:70px;height:18px;border:1px dotted #222"></div>
<div class="t" style="left:220px;top:681.5px;width:74px;text-align:center;color:#2c3040">添加(<u>A</u>)</div>
<div class="a" style="left:300px;top:677px;width:75px;height:23px;background:#fdeca4;border:1px solid #e6d9a0;border-radius:3px"></div>
<div class="t" style="left:300px;top:681.5px;width:75px;text-align:center;color:#2c3040">取消(<u>C</u>)</div>
<svg style="left:0;top:0" width="1207" height="711" viewBox="0 0 1207 711"><rect x="10.2" y="227.5" width="103.5" height="24" fill="none" stroke="#f5383c" stroke-width="2.8"/><rect x="24.5" y="658.5" width="115.5" height="33" fill="none" stroke="#f5383c" stroke-width="2.8"/><path d="M50.7 275.7 L60.9 340 L89.8 520 L99.5 580 L102.4 605 L102.6 618 L102.1 624 L111.7 638 L116.7 621.4 L113.6 622 L110.6 605 L106.7 580 L95.3 520 L62.6 340 L51.7 275.7Z" fill="#f5383c"/><path d="M140.6 651 L183.6 400 L200.8 300 L220 180 L230.4 124 L226.9 122.9 L236.6 108.6 L242 125.4 L238.4 125.5 L228.4 180 L206.1 300 L187.7 400 L141.6 651Z" fill="#f5383c"/></svg>
</body></html>
